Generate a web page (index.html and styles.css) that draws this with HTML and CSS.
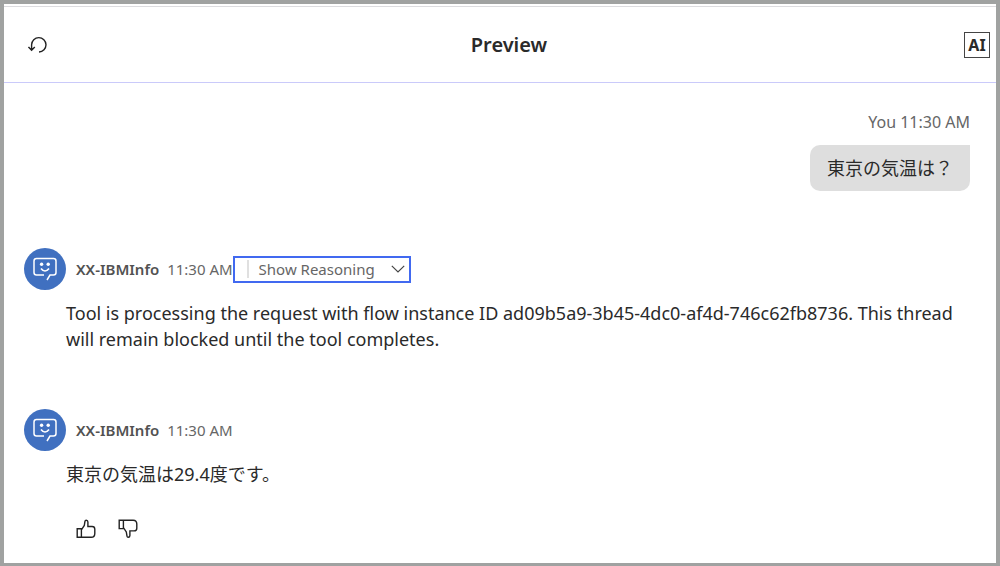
FILE: index.html
```html
<!DOCTYPE html>
<html lang="ja">
<head>
<meta charset="utf-8">
<meta name="viewport" content="width=device-width, initial-scale=1">
<title>Preview</title>
<link rel="stylesheet" href="styles.css">
</head>
<body>
<svg class="sprites" aria-hidden="true">
  <symbol id="bot" viewBox="0 0 42 42">
    <path d="M20 27h-7.500a2.500 2.500 0 0 1-2.500-2.500v-11.500a2.500 2.500 0 0 1 2.500-2.500h17a2.500 2.500 0 0 1 2.500 2.500v11.500a2.500 2.500 0 0 1-2.500 2.500h-3.500l-3 5" fill="none" stroke="#fff" stroke-width="1.500"/>
    <path d="M17 20.500q4 5 8 0" fill="none" stroke="#fff" stroke-width="1.700"/>
    <circle cx="17.600" cy="16.200" r="1.700" fill="#fff"/>
    <circle cx="24.200" cy="16.200" r="1.700" fill="#fff"/>
  </symbol>
</svg>
<div class="panel">
  <header class="header">
    <button class="icon-button wide" type="button" aria-label="Restart">
      <svg class="restart" viewBox="0 0 20 18"><path d="M11 16a7.200 7.200 0 1 0-7.400-7.300v5.300M.500 10.900l3.100 3.300 3.200-3.300" fill="none" stroke="#222" stroke-width="1.400"/></svg>
    </button>
    <h1 class="title">Preview</h1>
    <button class="ai-label" type="button">AI</button>
  </header>
  <main class="chat">
    <section class="message user">
      <p class="meta">You 11:30 AM</p>
      <p class="bubble">東京の気温は？</p>
    </section>
    <section class="message agent">
      <div class="agent-head">
        <svg class="avatar" aria-hidden="true"><use href="#bot"/></svg>
        <p class="meta"><strong>XX-IBMInfo</strong> <span>11:30 AM</span></p>
        <button class="reasoning" type="button">
          <span class="reasoning-text">Show Reasoning</span>
          <svg class="chevron" viewBox="0 0 14 8"><path d="M.800.800l6.200 6.200 6.200-6.200" fill="none" stroke="#444" stroke-width="1.200"/></svg>
        </button>
      </div>
      <p class="text">Tool is processing the request with flow instance ID ad09b5a9-3b45-4dc0-af4d-746c62fb8736. This thread will remain blocked until the tool completes.</p>
    </section>
    <section class="message agent">
      <div class="agent-head">
        <svg class="avatar" aria-hidden="true"><use href="#bot"/></svg>
        <p class="meta"><strong>XX-IBMInfo</strong> <span>11:30 AM</span></p>
      </div>
      <p class="text">東京の気温は29.4度です。</p>
      <div class="feedback">
        <button class="icon-button" type="button" aria-label="Good response">
          <svg class="thumb" viewBox="0 0 20 20"><path d="M1.200 9.800h4.200v8.400H1.200zM5.400 10.800L8.300 6.500l.700-4.300q.200-1 1.200-1 1.700 0 1.700 1.800v4.500h4.200q2.700 0 2.700 2.700v4.200q0 3.800-3.600 3.800H5.400" fill="none" stroke="#222" stroke-width="1.400"/></svg>
        </button>
        <button class="icon-button" type="button" aria-label="Bad response">
          <svg class="thumb" viewBox="0 0 20 20"><path d="M1.200 1.200h4.200v8.400H1.200zM5.400 8.600l2.900 4.300.700 4.300q.200 1 1.200 1 1.700 0 1.700-1.800v-4.500h4.200q2.700 0 2.700-2.700V5q0-3.800-3.600-3.800H5.400" fill="none" stroke="#222" stroke-width="1.400"/></svg>
        </button>
      </div>
    </section>
  </main>
</div>
</body>
</html>
```
FILE: styles.css
```css
* {
  box-sizing: border-box;
}

body {
  margin: 0;
  background: #fff;
  color: #2a2a2a;
  font-family: "Noto Sans", "Noto Sans CJK JP", sans-serif;
  font-size: 18px;
  line-height: 26px;
}

h1, p {
  margin: 0;
}

button {
  margin: 0;
  padding: 0;
  border: 0;
  background: none;
  color: inherit;
  font: inherit;
  cursor: pointer;
}

svg {
  display: block;
}

.sprites {
  position: absolute;
  width: 0;
  height: 0;
}

.panel {
  min-height: 100vh;
  padding-top: 2px;
  border: 4px solid #a0a2a1;
  border-bottom-width: 3px;
}

.header {
  display: flex;
  align-items: center;
  justify-content: space-between;
  height: 77px;
  padding: 0 6px 0 18px;
  border-top: 1px solid #dcdcdf;
  border-bottom: 1px solid #cacafa;
}

.icon-button {
  display: grid;
  place-items: center;
  width: 24px;
  height: 24px;
}

.icon-button.wide {
  width: 32px;
}

.restart {
  width: 20px;
  height: 18px;
}

.title {
  font-size: 20px;
  font-weight: 600;
}

.ai-label {
  width: 26px;
  height: 26px;
  border: 1px solid #444;
  font-size: 16px;
  font-weight: 700;
  line-height: 24px;
}

.chat {
  padding: 26px 20px 16px;
}

.meta {
  color: #666;
  font-size: 15px;
}

.meta strong {
  margin-right: 4px;
  color: #525252;
  font-weight: 600;
}

.user {
  display: flex;
  flex-direction: column;
  align-items: flex-end;
  gap: 10px;
  padding-right: 6px;
}

.user .meta {
  font-size: 16px;
}

.bubble {
  padding: 10px 17px;
  border-radius: 10px 0 10px 10px;
  background: #dedede;
}

.agent {
  margin-top: 57px;
}

.agent-head {
  display: flex;
  align-items: center;
}

.avatar {
  width: 42px;
  height: 42px;
  margin-right: 10px;
  border-radius: 50%;
  background: #4070c0;
}

.reasoning {
  display: flex;
  align-items: center;
  height: 27px;
  padding: 0 4px 0 12px;
  border: 2px solid #4169f0;
  color: #666;
  font-size: 15px;
}

.reasoning-text {
  padding-left: 10px;
  border-left: 2px solid #e0e0e0;
  line-height: 18px;
}

.chevron {
  width: 14px;
  height: 8px;
  margin-left: 16px;
}

.text {
  margin: 10px 0 0 42px;
}

.feedback {
  display: flex;
  gap: 18px;
  margin: 30px 0 0 50px;
}

.thumb {
  width: 20px;
  height: 20px;
}
```
